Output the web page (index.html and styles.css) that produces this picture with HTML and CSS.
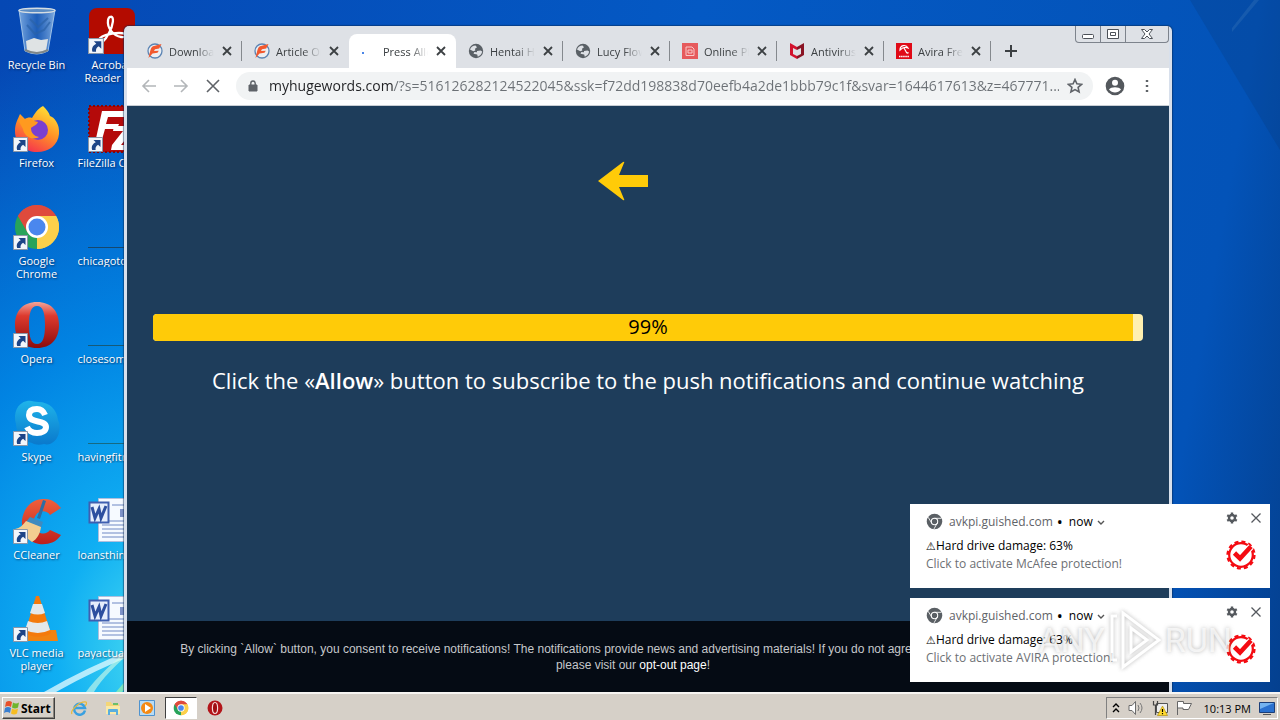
FILE: index.html
```html
<!DOCTYPE html>
<html lang="en">
<head>
    <meta charset="UTF-8">
    <title>Desktop</title>
    <link rel="stylesheet" href="styles.css">
</head>
<body>

<!-- shared icons -->
<svg class="defs" aria-hidden="true">
    <defs>
        <linearGradient id="operaRed" x1="0" y1="0" x2="0" y2="1">
            <stop offset="0" stop-color="#f2a59a"/>
            <stop offset=".3" stop-color="#dd3a2e"/>
            <stop offset="1" stop-color="#8c0c0c"/>
        </linearGradient>
        <linearGradient id="foxFire" x1=".8" y1="0" x2=".3" y2="1">
            <stop offset="0" stop-color="#ffe838"/>
            <stop offset=".5" stop-color="#ff9326"/>
            <stop offset="1" stop-color="#f5304f"/>
        </linearGradient>
        <linearGradient id="skypeBlue" x1="0" y1="0" x2="0" y2="1">
            <stop offset="0" stop-color="#1fb4ea"/>
            <stop offset="1" stop-color="#0a79cc"/>
        </linearGradient>
        <linearGradient id="ccRed" x1="0" y1="0" x2="0" y2="1">
            <stop offset="0" stop-color="#f0603c"/>
            <stop offset="1" stop-color="#bd1f1c"/>
        </linearGradient>
        <linearGradient id="glass" x1="0" y1="0" x2="1" y2="0">
            <stop offset="0" stop-color="#93bdea" stop-opacity=".8"/>
            <stop offset=".5" stop-color="#2f6cba" stop-opacity=".6"/>
            <stop offset="1" stop-color="#9cc2ea" stop-opacity=".8"/>
        </linearGradient>
    </defs>
    <symbol id="shortcut" viewBox="0 0 16 16">
        <path d="M0.500 0.500h14v14h-14z" fill="#f2f6fb" stroke="#8b97a8"/>
        <path d="M5.500 3h7v7l-2.400-2.300C8 9 7.200 10.400 7.600 13H4.200C3 9.500 4.700 6.800 7.800 5.300z" fill="#1c4487"/>
    </symbol>
    <symbol id="chrome" viewBox="0 0 48 48">
        <path d="M24 24 4.950 13A22 22 0 0 1 43.050 13z" fill="#df4a3c"/>
        <path d="M24 24 43.050 13A22 22 0 0 1 24 46z" fill="#fcd04b"/>
        <path d="M24 24V46A22 22 0 0 1 4.950 13z" fill="#27a35a"/>
        <path d="M24 13H43.050A22 22 0 0 0 4.950 13L14.500 29.500z" fill="#df4a3c"/>
        <path d="M33.500 29.500 24 46A22 22 0 0 0 43.050 13H24z" fill="#fcd04b"/>
        <circle cx="24" cy="24" r="11" fill="#fff"/>
        <circle cx="24" cy="24" r="8.500" fill="#4a87ee"/>
    </symbol>
    <symbol id="word" viewBox="0 0 48 48">
        <path d="M10.500 1.500h37v43h-37z" fill="#f6faff" stroke="#aebfdd"/>
        <path d="M32 12h13v8H32z" fill="#7f93c8"/>
        <path d="M14 24h31M14 28h31M14 32h31M14 36h31M14 40h31M24 8h21" stroke="#6f88c4"/>
        <path d="M1.500 5.500h19v20h-19z" fill="#e6eefc" stroke="#3f5fb0" stroke-width="2"/>
        <path d="m4 10 3 11 4-9 2 9 5-12" fill="none" stroke="#2d4f9f" stroke-width="3"/>
    </symbol>
    <symbol id="globe" viewBox="0 0 16 16">
        <circle cx="8" cy="8" r="7.200" fill="#5a6066"/>
        <path d="M2 6.500C3 4 5 2.700 7.500 2.600l1.500 1.600-2 1.600.3 1.700-2 .8zM9 8l3.500-.6 1.700 1.200c-.5 2.500-2 4.300-4.400 5.100l-.6-2.200-3.700-.8.800-1.700L9 9.300z" fill="#dee1e6"/>
    </symbol>
    <symbol id="fileplanet" viewBox="0 0 16 16">
        <circle cx="8" cy="8" r="7" fill="#eceef2" stroke="#5b84b4" stroke-width="1.300"/>
        <path d="M14.500 1 6 3.300C4.500 4 3.800 6 3.200 8L1.500 15l4-4.500 5-.8 1.300-2-4.800.4 1-1.800 4.200-.8z" fill="#f2592f"/>
    </symbol>
    <symbol id="cross" viewBox="0 0 10 10">
        <path d="m1 1 8 8M9 1 1 9" fill="none" stroke="currentColor" stroke-width="1.800"/>
    </symbol>
    <symbol id="thin-cross" viewBox="0 0 12 12">
        <path d="m1.500 1.500 9 9M10.500 1.500l-9 9" fill="none" stroke="currentColor" stroke-width="1.300"/>
    </symbol>
    <symbol id="chrome-grey" viewBox="0 0 16 16">
        <circle cx="8" cy="8" r="7.300" fill="#5a5f64"/>
        <circle cx="8" cy="8" r="3" fill="none" stroke="#fff" stroke-width="1"/>
        <path d="M8 5h6.600M5.400 9.500 2 4M10.600 9.500 7.500 15" stroke="#fff" stroke-width=".8"/>
    </symbol>
    <symbol id="gear" viewBox="0 0 12 12">
        <circle cx="6" cy="6" r="3" fill="none" stroke="currentColor" stroke-width="2.400"/>
        <path d="M6 .5v2M6 9.500v2M1.200 3.200l1.800 1M9 7.800l1.800 1M1.200 8.800l1.800-1M9 4.200l1.800-1" stroke="currentColor" stroke-width="2.400"/>
    </symbol>
    <symbol id="badge" viewBox="0 0 30 30">
        <circle cx="15" cy="15" r="11.800" fill="none" stroke="#f40b12" stroke-width="2.200"/>
        <circle cx="15" cy="15" r="13.400" fill="none" stroke="#f40b12" stroke-width="2.400" stroke-dasharray="4 3.016"/>
        <path d="m8.500 13 5.500 5.500L25 6.500" fill="none" stroke="#fff" stroke-width="7"/>
        <path d="m8.500 13 5.500 5.500L25 6.500" fill="none" stroke="#f40b12" stroke-width="4.600"/>
    </symbol>
</svg>

<main class="desktop">
    <svg class="wallpaper" viewBox="0 0 1280 692" preserveAspectRatio="none" aria-hidden="true">
        <path d="M44 692Q85 668 140 646L140 652Q95 670 56 692z" fill="#e6fbff" opacity=".75"/>
        <path d="M86 692Q100 672 140 640L140 644Q104 674 94 692z" fill="#d4fbe8" opacity=".6"/>
        <path d="M116 692 140 664V672L122 692z" fill="#9ff3a8" opacity=".7"/>
        <path d="M1232 28 1254 0h5L1232 32z" fill="#5b9bd8" opacity=".25"/>
        <path d="M1190 0h90v150z" fill="#0a3468" opacity=".2"/>
    </svg>

    <div class="icons">
        <a class="icon" href="#">
            <svg viewBox="0 0 48 48">
                <path d="M6 3 12 44Q24 50 35 44L42 3z" fill="url(#glass)" stroke="#9fc3e8"/>
                <path d="m13 34 8-3 7 2 7-1-2 12q-10 4-19 0z" fill="#dfe3e4"/>
                <path d="m17 12 8 8 10-9M14 18l8 9 9-4 6-8" fill="none" stroke="#2b62a8" stroke-width="2" opacity=".7"/>
                <ellipse cx="24" cy="3.500" rx="18" ry="2.300" fill="#5c8dc4" stroke="#d5dde2" stroke-width="1.400"/>
                <path d="M12 43q12 6 23 0" fill="none" stroke="#7f8789" stroke-width="2"/>
            </svg>
            <span>Recycle Bin</span>
        </a>
        <a class="icon" href="#">
            <svg viewBox="0 0 48 48">
                <rect x="1" y="1" width="46" height="46" rx="8" fill="#b30b00"/>
                <path d="M22 10c5-2 3 9-1 16-4 8-9 12-10 8-1-5 12-8 20-8 9 0 8 5 2 4-8-1-14-10-13-16 0-2 1-4 2-4z" fill="none" stroke="#fff" stroke-width="2.300"/>
                <use href="#shortcut" y="31" width="17" height="17"/>
            </svg>
            <span>Acrobat Reader DC</span>
        </a>
        <a class="icon" href="#">
            <svg viewBox="0 0 48 48">
                <path d="M30 1c3 3 6 6 7 10 4 1 10 8 9 18-1 11-10 18-22 18S2 39 2 26C2 18 5 14 7 9l5 5c2-1 4-2 7-1 2-3 5-9 11-12z" fill="url(#foxFire)"/>
                <circle cx="25" cy="25" r="10" fill="#7a3fcf"/>
                <path d="M5 14 12 14c4-1 6 0 9 2l4 1c-1 3-5 4-7 6 0 5 3 8 8 9-7 4-15-1-16-8C8 20 6 17 5 14z" fill="#ff9a1f"/>
                <use href="#shortcut" y="32" width="16" height="16"/>
            </svg>
            <span>Firefox</span>
        </a>
        <a class="icon" href="#">
            <svg viewBox="0 0 48 48">
                <path d="M1 1h46v46H1z" fill="#b40a0a" stroke="#8a0404" stroke-width="2" stroke-dasharray="2 2"/>
                <path d="M14 6h26l-2 6H20l-2 7h13l-2 5H17l-4 14H7z" fill="#fff"/>
                <path d="M26 21h19l-1 5-11 14h12l-1 5H23l1-5 11-14H25z" fill="#fff"/>
                <use href="#shortcut" y="32" width="16" height="16"/>
            </svg>
            <span class="file">FileZilla Client</span>
        </a>
        <a class="icon" href="#">
            <svg viewBox="0 0 48 48">
                <use href="#chrome" width="48" height="48"/>
                <use href="#shortcut" y="32" width="16" height="16"/>
            </svg>
            <span>Google Chrome</span>
        </a>
        <a class="icon" href="#">
            <svg viewBox="0 0 48 48"><path d="M0 44.500h48" stroke="#16486e"/></svg>
            <span class="file">chicagotowns.rtf</span>
        </a>
        <a class="icon" href="#">
            <svg viewBox="0 0 48 48">
                <path fill-rule="evenodd" d="M24 1C38 1 46 10 46 24S38 47 24 47 2 38 2 24 10 1 24 1zm0 4c-6 0-8 7-8 19s2 19 8 19 8-7 8-19-2-19-8-19z" fill="url(#operaRed)"/>
                <use href="#shortcut" y="32" width="16" height="16"/>
            </svg>
            <span>Opera</span>
        </a>
        <a class="icon" href="#">
            <svg viewBox="0 0 48 48"><path d="M0 44.500h48" stroke="#165a78"/></svg>
            <span class="file">closesomeone.rtf</span>
        </a>
        <a class="icon" href="#">
            <svg viewBox="0 0 48 48">
                <path d="M14 2c4-1 8 1 11 1 12 0 19 8 20 18 2 4 2 8 1 12-1 8-8 14-15 12-4 1-9 1-12-1C10 42 3 34 3 25 0 14 4 4 14 2z" fill="url(#skypeBlue)"/>
                <path d="M32 16c-2-5-5-6-8-6-5 0-8 2-8 6 0 9 17 4 17 12 0 4-4 6-9 6-4 0-8-2-10-6" fill="none" stroke="#fff" stroke-width="6"/>
                <use href="#shortcut" y="32" width="16" height="16"/>
            </svg>
            <span>Skype</span>
        </a>
        <a class="icon" href="#">
            <svg viewBox="0 0 48 48"><path d="M0 44.500h48" stroke="#166a82"/></svg>
            <span class="file">havingfitness.rtf</span>
        </a>
        <a class="icon" href="#">
            <svg viewBox="0 0 48 48">
                <path d="M48 11 37 18c-3-5-11-5-14 0-4 5-3 13 1 16 5 4 10 3 13-1l11 5c-5 8-14 10-22 9C15 45 8 36 9 23 11 8 22 1 32 2c7 0 12 4 16 9z" fill="url(#ccRed)"/>
                <path d="m30 3 3 1-6 18-3-1z" fill="#2e6da3"/>
                <path d="m17 20 13 5-2 6-15-6z" fill="#3f8ac0"/>
                <path d="m13 24 15 6c-1 7-4 12-9 15L2 32c5-1 8-4 11-8z" fill="#f3cd91"/>
                <use href="#shortcut" y="32" width="16" height="16"/>
            </svg>
            <span>CCleaner</span>
        </a>
        <a class="icon" href="#">
            <svg viewBox="0 0 48 48"><use href="#word" width="48" height="48"/></svg>
            <span class="file">loansthings.rtf</span>
        </a>
        <a class="icon" href="#">
            <svg viewBox="0 0 48 48">
                <path d="M11 35h32l2 11H4z" fill="#f08312"/>
                <path d="M23 1h3l12 37c-6 5-20 5-26 0z" fill="#f47a0c"/>
                <path d="m20 9 9 0 3 9q-7 3-15 0zM15 26q10 4 19 0l3 9q-12 6-25 0z" fill="#e4e8ea"/>
                <use href="#shortcut" y="32" width="16" height="16"/>
            </svg>
            <span>VLC media player</span>
        </a>
        <a class="icon" href="#">
            <svg viewBox="0 0 48 48"><use href="#word" width="48" height="48"/></svg>
            <span class="file">payactually.rtf</span>
        </a>
    </div>

    <section class="browser">
        <header class="tabstrip">
            <div class="tab">
                <svg class="favicon"><use href="#fileplanet"/></svg>
                <span class="tab-title">Download</span>
                <button class="tab-close" aria-label="Close tab"><svg><use href="#cross"/></svg></button>
            </div>
            <div class="tab before-active">
                <svg class="favicon"><use href="#fileplanet"/></svg>
                <span class="tab-title">Article Online</span>
                <button class="tab-close" aria-label="Close tab"><svg><use href="#cross"/></svg></button>
            </div>
            <div class="tab active">
                <svg class="favicon" viewBox="0 0 16 16"><path d="M1 9h2v2H1z" fill="#4a86e8"/></svg>
                <span class="tab-title">Press Allow</span>
                <button class="tab-close" aria-label="Close tab"><svg><use href="#cross"/></svg></button>
            </div>
            <div class="tab">
                <svg class="favicon"><use href="#globe"/></svg>
                <span class="tab-title">Hentai Ha</span>
                <button class="tab-close" aria-label="Close tab"><svg><use href="#cross"/></svg></button>
            </div>
            <div class="tab">
                <svg class="favicon"><use href="#globe"/></svg>
                <span class="tab-title">Lucy Flow</span>
                <button class="tab-close" aria-label="Close tab"><svg><use href="#cross"/></svg></button>
            </div>
            <div class="tab">
                <svg class="favicon" viewBox="0 0 16 16">
                    <path d="M0 0h16v16H0z" fill="#e65a5c"/>
                    <path d="M4 4h6l2 2v6.500H4zM6 7h4v3H6z" fill="none" stroke="#f9c9c9"/>
                </svg>
                <span class="tab-title">Online PDF</span>
                <button class="tab-close" aria-label="Close tab"><svg><use href="#cross"/></svg></button>
            </div>
            <div class="tab">
                <svg class="favicon" viewBox="0 0 16 16">
                    <path d="m1 0 7 4v3L4 5v6l4 2v3l-7-4z" fill="#d3122e"/>
                    <path d="m15 0-7 4v3l4-2v6l-4 2v3l7-4z" fill="#8a1424"/>
                </svg>
                <span class="tab-title">Antivirus, V</span>
                <button class="tab-close" aria-label="Close tab"><svg><use href="#cross"/></svg></button>
            </div>
            <div class="tab">
                <svg class="favicon" viewBox="0 0 16 16">
                    <path d="M0 0h16v16H0z" fill="#e00a17"/>
                    <path d="M4 7c0-5 6-6 8-2-2-1-5-1-8 2zM8 5l2.500 4.500q1 1 2 0" fill="none" stroke="#fff" stroke-width="1.200"/>
                    <path d="M3 13.500h10" stroke="#fff" stroke-width="1.500" stroke-dasharray="1.500 .6"/>
                </svg>
                <span class="tab-title">Avira Free</span>
                <button class="tab-close" aria-label="Close tab"><svg><use href="#cross"/></svg></button>
            </div>
            <button class="new-tab" aria-label="New tab">
                <svg viewBox="0 0 14 14"><path d="M7 1v12M1 7h12" stroke="#3c4043" stroke-width="2"/></svg>
            </button>
            <div class="window-buttons">
                <button aria-label="Minimize"><svg viewBox="0 0 12 12"><rect x=".5" y="6.500" width="11" height="4" rx="1"/></svg></button>
                <button aria-label="Maximize"><svg viewBox="0 0 12 12"><path d="M.5 1.500h11v9H.5zM3.500 4.500h5v3h-5z"/></svg></button>
                <button class="wide" aria-label="Close"><svg viewBox="0 0 12 12"><path d="M.5 1.500h3L6 4l2.500-2.500h3L8 6l3.500 4.500h-3L6 8l-2.500 2.500h-3L4 6z"/></svg></button>
            </div>
        </header>

        <nav class="toolbar">
            <button class="dim" aria-label="Back"><svg viewBox="0 0 16 16"><path d="M15 8H2M8 2 2 8l6 6"/></svg></button>
            <button class="dim" aria-label="Forward"><svg viewBox="0 0 16 16"><path d="M1 8h13M8 2l6 6-6 6"/></svg></button>
            <button aria-label="Stop"><svg viewBox="0 0 16 16"><path d="m2 2 12 12M14 2 2 14"/></svg></button>
            <div class="omnibox">
                <svg class="lock" viewBox="0 0 10 14"><path d="M1 6h8v6H1z" fill="#5f6368" stroke="#5f6368"/><path d="M2.800 6V4.200a2.200 2.200 0 0 1 4.400 0V6" fill="none" stroke="#5f6368" stroke-width="1.400"/></svg>
                <input type="text" aria-label="Address" value="myhugewords.com/?s=516126282124522045&amp;ssk=f72dd198838d70eefb4a2de1bbb79c1f&amp;svar=1644617613&amp;z=467771...">
                <button aria-label="Bookmark"><svg viewBox="0 0 16 16"><path d="m8 1.500 1.900 4.300 4.700.5-3.500 3.100 1 4.600L8 11.600 3.900 14l1-4.600L1.400 6.300l4.700-.5z"/></svg></button>
            </div>
            <button aria-label="Profile"><svg class="avatar" viewBox="0 0 20 20"><circle cx="10" cy="10" r="9.300" fill="#54585d" stroke="none"/><circle cx="10" cy="6.800" r="3" fill="#fff" stroke="none"/><path d="M4 13.500c2-3 10-3 12 0-3 4-9 4-12 0z" fill="#fff" stroke="none"/></svg></button>
            <button aria-label="Menu"><svg viewBox="0 0 16 16"><path d="M8 2v2M8 7v2M8 12v2" stroke-width="2.400"/></svg></button>
        </nav>

        <div class="page">
            <div class="hint">
                <svg class="arrow" viewBox="0 0 50 40"><path d="M0 20 25 1Q27 0 26 2L21 14H50V26H21L26 38Q27 40 25 39z" fill="#ffcb08"/></svg>
            </div>
            <div class="progress" role="progressbar" aria-valuenow="99" aria-valuemin="0" aria-valuemax="100">
                <div class="progress-bar" style="width: 99%"></div>
                <span class="progress-label">99%</span>
            </div>
            <h1>Click the «<b>Allow</b>» button to subscribe to the push notifications and continue watching</h1>
            <footer class="consent">
                <p>By clicking `Allow` button, you consent to receive notifications! The notifications provide news and advertising materials! If you do not agree, or want to unsubscribe from it,<br>please visit our <a href="#">opt-out page</a>!</p>
            </footer>
        </div>
    </section>

    <aside class="notifications">
        <article class="notification">
            <header>
                <svg class="app"><use href="#chrome-grey"/></svg>
                <span class="site">avkpi.guished.com</span>
                <span class="dot">•</span>
                <span>now</span>
                <svg class="caret" viewBox="0 0 8 8"><path d="m1 3 3 3 3-3" fill="none" stroke="#555" stroke-width="1.400"/></svg>
                <button class="settings" aria-label="Settings"><svg><use href="#gear"/></svg></button>
                <button aria-label="Dismiss"><svg><use href="#thin-cross"/></svg></button>
            </header>
            <div class="message">
                <div>
                    <h2><span class="warn">⚠</span>Hard drive damage: 63%</h2>
                    <p>Click to activate McAfee protection!</p>
                </div>
                <svg class="badge"><use href="#badge"/></svg>
            </div>
        </article>
        <article class="notification">
            <header>
                <svg class="app"><use href="#chrome-grey"/></svg>
                <span class="site">avkpi.guished.com</span>
                <span class="dot">•</span>
                <span>now</span>
                <svg class="caret" viewBox="0 0 8 8"><path d="m1 3 3 3 3-3" fill="none" stroke="#555" stroke-width="1.400"/></svg>
                <button class="settings" aria-label="Settings"><svg><use href="#gear"/></svg></button>
                <button aria-label="Dismiss"><svg><use href="#thin-cross"/></svg></button>
            </header>
            <div class="message">
                <div>
                    <h2><span class="warn">⚠</span>Hard drive damage: 63%</h2>
                    <p>Click to activate AVIRA protection!</p>
                </div>
                <svg class="badge"><use href="#badge"/></svg>
            </div>
        </article>
    </aside>

    <div class="watermark">
        <span>ANY</span>
        <svg viewBox="0 0 52 64"><path d="M14 5 50 32 14 59zM22 20v24l16-12zM8 8H3v44h5" fill="none" stroke="#fff" stroke-width="3"/></svg>
        <span>RUN</span>
    </div>
</main>

<footer class="taskbar">
    <button class="start">
        <svg viewBox="0 0 16 16">
            <path d="M2 2q3-2 6 0L7 7Q4 5 1 7z" fill="#e8502a"/>
            <path d="M9 2.500q3 2 6 0l-1 5q-3 2-6 0z" fill="#6fb52c"/>
            <path d="M1 8q3-2 6 0l-1 5q-3-2-6 0z" fill="#3a7fd0"/>
            <path d="M8 8.500q3 2 6 0l-1 5q-3 2-6 0z" fill="#f7bd22"/>
        </svg>
        Start
    </button>
    <nav class="quick">
        <button aria-label="Internet Explorer">
            <svg viewBox="0 0 16 16">
                <path d="M14 10.500A5.500 5.500 0 1 1 14 8H4" fill="none" stroke="#3aa0e0" stroke-width="2.500"/>
                <path d="M1 14C-1 11 8 1 15 2c1 1 0 3-1 4" fill="none" stroke="#e8b93a" stroke-width="1.200"/>
            </svg>
        </button>
        <button aria-label="Explorer">
            <svg viewBox="0 0 16 16">
                <path d="M1 2h5l1 2h7v9H1z" fill="#f3d678"/>
                <path d="M1 6h14v8H1z" fill="#f9e9a8"/>
                <path d="M3 15v-5q0-1 1-1h8q1 0 1 1v5h-2v-3H5v3z" fill="#59aede"/>
                <path d="M8 3h5v2H8z" fill="#6bbf6b"/>
            </svg>
        </button>
        <button aria-label="Media Player">
            <svg viewBox="0 0 16 16">
                <path d="M.5.5h15v15H.5z" fill="#b8dcf5" stroke="#4f93cf"/>
                <circle cx="8" cy="8" r="6" fill="#f58a14"/>
                <path d="m6 4 6 4-6 4z" fill="#fff"/>
            </svg>
        </button>
        <button class="pressed" aria-label="Chrome"><svg><use href="#chrome"/></svg></button>
        <button aria-label="Opera">
            <svg viewBox="0 0 16 16"><circle cx="8" cy="8" r="7.500" fill="#b3151a"/><ellipse cx="8" cy="8" rx="2.600" ry="5.500" fill="#a00e12" stroke="#f6dada" stroke-width="1.200"/></svg>
        </button>
    </nav>
    <div class="tray">
        <svg class="chevrons" viewBox="0 0 8 10"><path d="m1 4 3-3 3 3M1 9l3-3 3 3" fill="none" stroke="#000" stroke-width="1.400"/></svg>
        <svg viewBox="0 0 16 16"><path d="M1 5.500h3l3.500-4v13L4 10.500H1z" fill="#fff" stroke="#6b6b6b"/><path d="M10 5q2 3 0 6M12 3q4 5 0 10" fill="none" stroke="#777"/></svg>
        <svg viewBox="0 0 16 16"><path d="M4.500 3.500h11v9h-11z" fill="#eee" stroke="#555"/><path d="M1.500 1v4h4V1M3.500 5v10" fill="none" stroke="#444" stroke-width="1.200"/><path d="m10.500 6 5 9.500h-10z" fill="#ffd92e" stroke="#a88600" stroke-width=".6"/><path d="M10.500 9v3M10.500 13v1.200" stroke="#000" stroke-width="1.200"/></svg>
        <svg viewBox="0 0 16 16"><path d="M1.500 15V1.500h6v2h8l-3 6H7V8H1.500" fill="#fff" stroke="#666"/></svg>
        <time>10:13 PM</time>
        <svg viewBox="0 0 16 16"><path d="M.5 2.500h15v10H.5z" fill="#2a71cf" stroke="#1b3e78"/><path d="M1 3h14L1 9z" fill="#74b3ef"/><path d="M4 14.500h8" stroke="#555"/></svg>
    </div>
</footer>

</body>
</html>
```

FILE: styles.css
```css
* {
    box-sizing: border-box;
}
body {
    margin: 0;
    height: 100vh;
    display: flex;
    flex-direction: column;
    overflow: hidden;
    font-family: "Open Sans", "Noto Sans", sans-serif;
    font-size: 11px;
}
button {
    padding: 0;
    border: 0;
    background: none;
    font: inherit;
    color: inherit;
    display: flex;
    align-items: center;
    justify-content: center;
}
.defs {
    position: absolute;
    width: 0;
    height: 0;
}

/* desktop */
.desktop {
    flex: 1;
    min-height: 0;
    position: relative;
    overflow: hidden;
    background:
        radial-gradient(ellipse 500px 620px at 13% 94%, #4fe0f0 0, rgba(16, 180, 246, 0.95) 22%, rgba(0, 146, 238, 0.8) 52%, rgba(0, 100, 215, 0) 100%),
        linear-gradient(100deg, #0548b4 0%, #0459c4 50%, #0353b8 90%, #04408f 100%);
}
.wallpaper {
    position: absolute;
    inset: 0;
    width: 100%;
    height: 100%;
}
.icons {
    position: relative;
    display: grid;
    grid-template-columns: 73px 77px;
    grid-auto-rows: 98px;
    padding-top: 7px;
}
.icon {
    display: flex;
    flex-direction: column;
    align-items: center;
    color: #fff;
    line-height: 13px;
    text-align: center;
    text-decoration: none;
    text-shadow: 1px 1px 2px rgba(0, 20, 60, 0.7);
}
.icon svg {
    width: 48px;
    height: 48px;
    margin-bottom: 3px;
}
.icon span {
    max-width: 68px;
}
.icon .file {
    overflow: hidden;
    text-overflow: ellipsis;
    white-space: nowrap;
}

/* browser window */
.browser {
    position: absolute;
    top: 26px;
    right: 108px;
    bottom: 0;
    left: 124px;
    display: flex;
    flex-direction: column;
    border: 3px solid #d8e0ec;
    border-width: 0 3px;
    border-radius: 5px 5px 0 0;
    background: #dee1e6;
    box-shadow: 0 0 1px 1px rgba(10, 40, 80, 0.5);
}
.tabstrip {
    display: flex;
    align-items: flex-end;
    height: 42px;
    padding-left: 8px;
}
.tab {
    flex: 0 1 107px;
    min-width: 0;
    height: 34px;
    display: flex;
    align-items: center;
    padding: 0 10px 0 12px;
    color: #3c4043;
    background: linear-gradient(#85898e, #85898e) right center / 1px 20px no-repeat;
}
.tab.before-active {
    background: none;
}
.tab.active {
    background: #fff;
    border-radius: 8px 8px 0 0;
}
.favicon {
    flex: none;
    width: 16px;
    height: 16px;
    margin-right: 6px;
}
.tab-title {
    flex: 1;
    min-width: 0;
    overflow: hidden;
    white-space: nowrap;
    margin-right: 8px;
    -webkit-mask-image: linear-gradient(90deg, #000 60%, transparent);
    mask-image: linear-gradient(90deg, #000 60%, transparent);
}
.tab-close svg {
    width: 10px;
    height: 10px;
}
.new-tab {
    width: 28px;
    height: 34px;
    margin-left: 6px;
}
.new-tab svg {
    width: 14px;
    height: 14px;
}
.window-buttons {
    display: flex;
    align-self: flex-start;
    margin-left: auto;
    height: 17px;
    border: 1px solid #7d838c;
    border-top: 0;
    border-radius: 0 0 4px 4px;
}
.window-buttons button {
    width: 25px;
    border-right: 1px solid #7d838c;
}
.window-buttons .wide {
    width: 42px;
    border-right: 0;
}
.window-buttons svg {
    width: 12px;
    height: 12px;
    fill: #fff;
    stroke: #4c5158;
}
.toolbar {
    display: flex;
    align-items: center;
    height: 38px;
    padding: 0 6px 2px;
    background: #fff;
    border-bottom: 1px solid #c9ced4;
}
.toolbar button {
    width: 32px;
    height: 28px;
}
.toolbar svg {
    width: 16px;
    height: 16px;
    fill: none;
    stroke: #5f6368;
    stroke-width: 1.600;
}
.toolbar .dim svg {
    stroke: #b3b6b9;
}
.toolbar .avatar {
    width: 20px;
    height: 20px;
}
.omnibox {
    flex: 1;
    min-width: 0;
    display: flex;
    align-items: center;
    height: 28px;
    margin: 0 6px 0 7px;
    padding-left: 12px;
    border-radius: 14px;
    background: #f1f3f4;
}
.omnibox .lock {
    flex: none;
    width: 10px;
    height: 14px;
    stroke-width: 1;
}
.omnibox button {
    margin-right: 2px;
}
.omnibox input {
    flex: 1;
    min-width: 0;
    margin-left: 11px;
    padding: 0;
    border: 0;
    outline: 0;
    font: 14px "Open Sans", "Noto Sans", sans-serif;
    color: transparent;
    background: linear-gradient(90deg, #202124 124px, #6c7176 124px);
    -webkit-background-clip: text;
    background-clip: text;
}

/* page in the browser */
.page {
    flex: 1;
    min-height: 0;
    display: flex;
    flex-direction: column;
    background: #1e3d5b;
    color: #fff;
}
.hint {
    display: flex;
    justify-content: center;
    padding: 55px 50px 113px 0;
}
.arrow {
    width: 50px;
    height: 40px;
}
.progress {
    display: grid;
    height: 27px;
    margin: 0 26px;
    border-radius: 4px;
    overflow: hidden;
    background: #fff0b0;
}
.progress-bar,
.progress-label {
    grid-area: 1 / 1;
}
.progress-bar {
    background: #ffcb08;
}
.progress-label {
    color: #000;
    font-size: 20px;
    line-height: 25px;
    text-align: center;
}
h1 {
    margin: 24px 20px 0;
    font-size: 22px;
    font-weight: 400;
    line-height: 30px;
    text-align: center;
}
h1 b {
    font-weight: 600;
}
.consent {
    margin-top: auto;
    height: 71px;
    padding: 20px 30px 0 0;
    background: #050b14;
    color: #c6c8cb;
    font: 12px "Liberation Sans", Arial, sans-serif;
    line-height: 16px;
    text-align: center;
}
.consent p {
    margin: 0;
}
.consent a {
    color: #fff;
    text-decoration: none;
}

/* notifications */
.notifications {
    position: absolute;
    right: 10px;
    bottom: 10px;
    width: 360px;
    display: flex;
    flex-direction: column;
    gap: 10px;
}
.notification {
    height: 84px;
    padding: 8px 8px 0 16px;
    background: #fff;
    font-size: 12px;
    color: #000;
}
.notification header {
    display: flex;
    align-items: center;
    height: 19px;
}
.notification .app {
    width: 17px;
    height: 17px;
    margin-right: 6px;
}
.notification .app use {
    width: 17px;
    height: 17px;
}
.site {
    color: #5f6368;
}
.dot {
    margin: 0 6px 0 4px;
    font-size: 16px;
    line-height: 16px;
}
.caret {
    width: 8px;
    height: 8px;
    margin-left: 4px;
}
.notification .settings {
    margin-left: auto;
    margin-right: 12px;
}
.notification button {
    align-self: flex-start;
    color: #55595e;
}
.notification button svg {
    width: 12px;
    height: 12px;
}
.message {
    display: flex;
    align-items: center;
    justify-content: space-between;
    margin-top: 6px;
    padding-right: 6px;
}
.message h2,
.message p {
    margin: 0;
    font-size: 12px;
    font-weight: 400;
    line-height: 17px;
}
.message p {
    color: #6d7074;
}
.warn {
    font-family: "DejaVu Sans", sans-serif;
    font-size: 11px;
}
.badge {
    width: 30px;
    height: 30px;
}
.watermark {
    position: absolute;
    right: 48px;
    bottom: 20px;
    display: flex;
    align-items: center;
    gap: 4px;
    color: rgba(255, 255, 255, 0.7);
    font: 34px "Roboto", sans-serif;
    line-height: 64px;
    text-shadow: 0 0 4px rgba(110, 110, 110, 0.5);
    pointer-events: none;
}
.watermark svg {
    width: 52px;
    height: 64px;
    opacity: 0.7;
    filter: drop-shadow(0 0 2px rgba(110, 110, 110, 0.7));
}

/* taskbar */
.taskbar {
    display: flex;
    align-items: center;
    height: 28px;
    padding: 2px 2px 0;
    background: #d6d0c8;
    border-top: 2px solid #f7f5f2;
}
.start {
    height: 22px;
    gap: 1px;
    padding: 0 3px 0 1px;
    border: 1px solid #fff;
    border-right-color: #404040;
    border-bottom-color: #404040;
    box-shadow: inset -1px -1px 0 #8a857d;
    font: bold 12px "Open Sans", "Noto Sans", sans-serif;
}
.start svg {
    width: 16px;
    height: 16px;
}
.quick {
    display: flex;
    gap: 2px;
    margin-left: 8px;
}
.quick button {
    width: 32px;
    height: 22px;
}
.quick svg {
    width: 16px;
    height: 16px;
}
.quick .pressed {
    background: #fff;
    border: 1px solid #404040;
    border-right-color: #fff;
    border-bottom-color: #fff;
}
.tray {
    display: flex;
    align-items: center;
    gap: 8px;
    height: 22px;
    margin-left: auto;
    padding: 0 2px 0 5px;
    border: 1px solid #808080;
    border-right-color: #fff;
    border-bottom-color: #fff;
}
.tray svg {
    width: 16px;
    height: 16px;
}
.tray .chevrons {
    width: 8px;
    height: 10px;
}
.tray time {
    margin-left: 4px;
}
```
